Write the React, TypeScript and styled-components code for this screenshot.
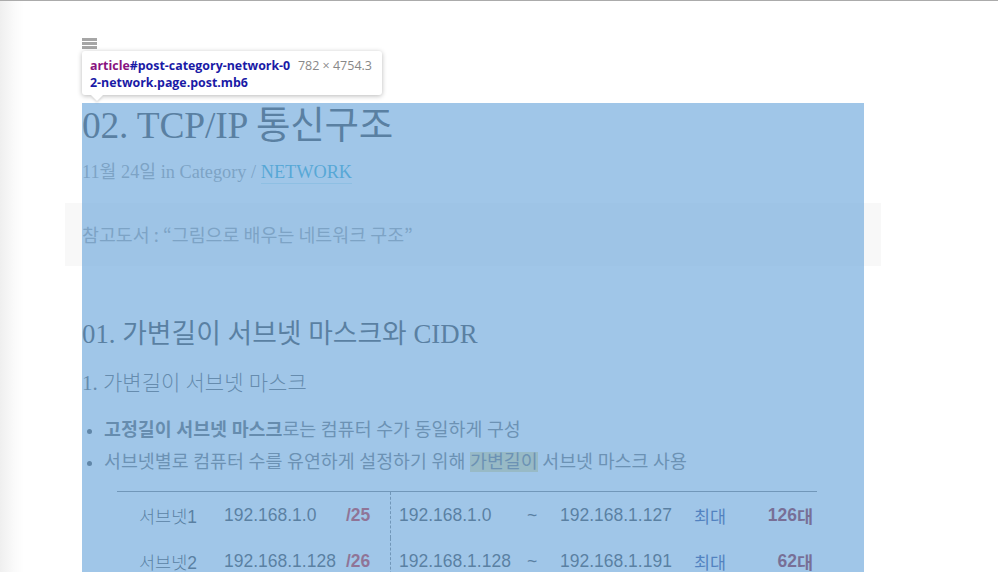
import React from "react";
import styled, { createGlobalStyle } from "styled-components";

const LATIN = `"Liberation Serif", "Noto Sans CJK KR", serif`;
const KR = `"Noto Sans CJK KR", sans-serif`;

const Global = createGlobalStyle`
  html, body { margin: 0; padding: 0; background: #fff; overflow: hidden; }
  body { width: 998px; height: 572px; font-family: ${LATIN}; }
`;

const Page = styled.div`
  position: relative;
  width: 998px;
  height: 572px;
  overflow: hidden;
  border-top: 1px solid #ababab;
  box-sizing: border-box;
  background: linear-gradient(to right, #efefef 0px, #fafafa 14px, #fff 24px);
`;

const Article = styled.article`
  position: relative;
  margin: 102px 0 0 82px;
  width: 782px;
`;

const Overlay = styled.div`
  position: absolute;
  left: 0;
  top: 0;
  width: 782px;
  height: 4754px;
  background: rgba(111, 168, 220, 0.66);
  pointer-events: none;
`;

const MenuIcon = styled.div`
  position: absolute;
  left: 0;
  top: -65px;
  width: 15px;
  display: flex;
  flex-direction: column;
  gap: 1px;
  & > span { display: block; height: 3px; background: #a6a6a6; }
`;

const Tooltip = styled.div`
  position: absolute;
  left: 0;
  top: -52px;
  width: 300px;
  height: 44px;
  box-sizing: border-box;
  background: #fff;
  border-radius: 3px;
  box-shadow: 0 1px 5px rgba(0, 0, 0, 0.28);
  padding: 6px 8px 0;
  display: flex;
  justify-content: space-between;
  font-family: "Open Sans", "DejaVu Sans", sans-serif;
  font-size: 12.4px;
  line-height: 17px;
  &::after {
    content: "";
    position: absolute;
    left: 9px;
    bottom: -6px;
    width: 0;
    height: 0;
    border-left: 6px solid transparent;
    border-right: 6px solid transparent;
    border-top: 6px solid #fff;
    filter: drop-shadow(0 2px 1px rgba(0,0,0,0.12));
  }
`;

const Selector = styled.div`
  font-weight: 700;
  color: #1a1aa6;
  width: 207px;
  word-break: break-all;
  & > em { font-style: normal; color: #881280; }
`;

const Dims = styled.div`
  color: #888;
  white-space: nowrap;
  font-size: 12.5px;
  padding-right: 2px;
`;

const Title = styled.h1`
  margin: 0;
  font-family: ${LATIN};
  font-weight: 400;
  font-size: 37.5px;
  line-height: 46px;
  color: #333;
  letter-spacing: -0.2px;
`;

const Meta = styled.div`
  margin-top: 10px;
  font-family: ${LATIN};
  font-size: 18.3px;
  line-height: 26px;
  color: #999;
`;

const MetaLink = styled.a`
  color: #2aa6c9;
  text-decoration: none;
  border-bottom: 1px solid rgba(42, 166, 201, 0.25);
  padding-bottom: 1px;
`;

const Quote = styled.blockquote`
  margin: 18px -17px 0;
  padding: 18px 17px;
  background: #f8f8f8;
  font-family: ${KR};
  font-size: 18.4px;
  line-height: 27px;
  color: #9a9a9a;
`;

const H2 = styled.h2`
  margin: 50px 0 0;
  font-family: ${LATIN};
  font-weight: 400;
  font-size: 26.8px;
  line-height: 36px;
  color: #333;
`;

const H3 = styled.h3`
  margin: 16px 0 0;
  font-family: ${LATIN};
  font-weight: 300;
  font-size: 21px;
  line-height: 30px;
  color: #555;
`;

const List = styled.ul`
  margin: 16px 0 0;
  padding-left: 22px;
  font-family: ${LATIN};
  font-size: 18.4px;
  line-height: 32px;
  color: #666;
  & > li::marker { color: #444; }
`;

const Strong = styled.strong`
  font-weight: 700;
  color: #555;
`;

const Mark = styled.mark`
  background: #e6dc9c;
  color: inherit;
`;

const Table = styled.div`
  margin: 13px 0 0 35px;
  width: 700px;
  border-top: 1px solid #777;
  display: grid;
  grid-template-columns: 22px 85px 122px 45px 136px 33px 134px 60px 1fr;
  grid-auto-rows: 46px;
  font-family: "Liberation Sans", "Noto Sans CJK KR", sans-serif;
  font-size: 17.5px;
  color: #333;
`;

const Cell = styled.div<{ $kind?: "prefix" | "count" | "max" | "tilde" | "ip2" }>`
  display: flex;
  align-items: center;
  white-space: nowrap;
  ${(p) => p.$kind === "prefix" && `
    color: #d01010;
    font-weight: 700;
    border-right: 1px dashed #777;
  `}
  ${(p) => p.$kind === "ip2" && `padding-left: 8px;`}
  ${(p) => p.$kind === "max" && `color: #1c3a8a; font-family: "Noto Sans CJK KR", sans-serif;`}
  ${(p) => p.$kind === "count" && `
    color: #8a0010;
    font-weight: 700;
    justify-content: flex-end;
    padding-right: 4px;
  `}
`;

const Label = styled.span<{ $bold?: boolean }>`
  font-family: "Noto Sans CJK KR", sans-serif;
  font-weight: ${(p) => (p.$bold ? 700 : 300)};
  & > i { font-style: normal; font-family: "Liberation Sans", sans-serif; }
`;

const rows = [
  { name: "1", ip: "192.168.1.0", prefix: "/25", from: "192.168.1.0", to: "192.168.1.127", count: "126" },
  { name: "2", ip: "192.168.1.128", prefix: "/26", from: "192.168.1.128", to: "192.168.1.191", count: "62" },
];

export default function App() {
  return (
    <>
      <Global />
      <Page>
        <Article>
          <Title>02. TCP/IP 통신구조</Title>
          <Meta>
            11월 24일 in Category / <MetaLink>NETWORK</MetaLink>
          </Meta>
          <Quote>참고도서 : “그림으로 배우는 네트워크 구조”</Quote>
          <H2>01. 가변길이 서브넷 마스크와 CIDR</H2>
          <H3>1. 가변길이 서브넷 마스크</H3>
          <List>
            <li>
              <Strong>고정길이 서브넷 마스크</Strong>로는 컴퓨터 수가 동일하게 구성
            </li>
            <li>
              서브넷별로 컴퓨터 수를 유연하게 설정하기 위해 <Mark>가변길이</Mark> 서브넷 마스크 사용
            </li>
          </List>
          <Table>
            {rows.map((r) => (
              <React.Fragment key={r.name}>
                <Cell />
                <Cell>
                  <Label>
                    서브넷<i>{r.name}</i>
                  </Label>
                </Cell>
                <Cell>{r.ip}</Cell>
                <Cell $kind="prefix">{r.prefix}</Cell>
                <Cell $kind="ip2">{r.from}</Cell>
                <Cell $kind="tilde">~</Cell>
                <Cell>{r.to}</Cell>
                <Cell $kind="max">최대</Cell>
                <Cell $kind="count">
                  {r.count}
                  <Label $bold>대</Label>
                </Cell>
              </React.Fragment>
            ))}
          </Table>
          <Overlay />
          <MenuIcon>
            <span />
            <span />
            <span />
          </MenuIcon>
          <Tooltip>
            <Selector>
              <em>article</em>#post-category-network-02-network.page.post.mb6
            </Selector>
            <Dims>782 × 4754.3</Dims>
          </Tooltip>
        </Article>
      </Page>
    </>
  );
}
